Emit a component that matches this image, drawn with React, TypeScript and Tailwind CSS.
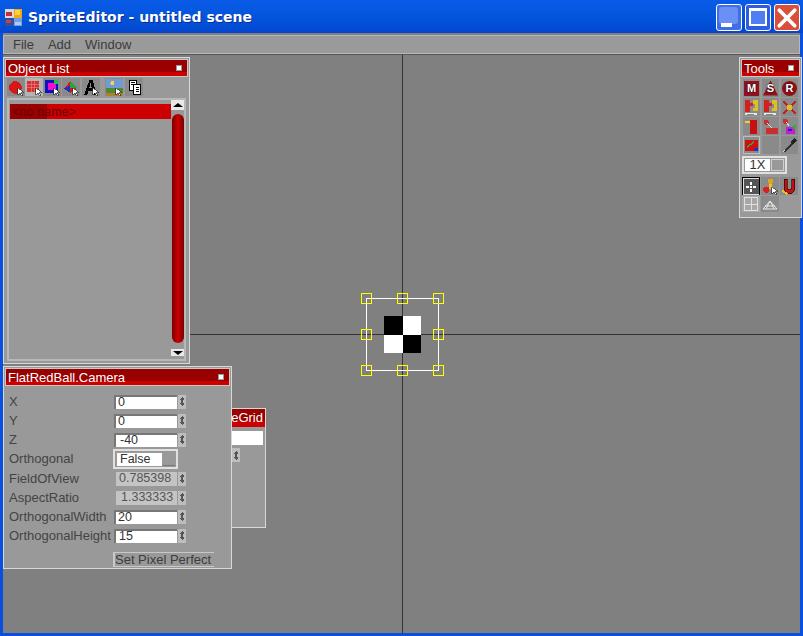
import type { ReactNode } from "react";

const sans = "font-['Liberation_Sans',Arial,sans-serif]";

function TitleBar({ label, className }: { label: string; className: string }) {
  return (
    <div className={`relative flex h-[18px] items-center overflow-hidden border border-[#c8c8c8] bg-[#cc0000] ${className}`}>
      <div className="absolute inset-x-0 top-0 h-[12px] bg-[#990000]" />
      <span className="relative pl-[2px] text-[13px] leading-none text-white">{label}</span>
      <span className="relative ml-auto mr-[5px] size-[6px] border border-[#999] bg-white" />
    </div>
  );
}

function Ico({ children, active, className }: { children?: ReactNode; active?: boolean; className?: string }) {
  return (
    <div className={`flex h-[18px] items-center justify-center ${active ? "bg-[#b4b4b4]" : "bg-[#8a8a8a]"} ${className ?? ""}`}>
      <svg viewBox="0 0 16 16" className="size-[17px]" shapeRendering="crispEdges">
        {children}
      </svg>
    </div>
  );
}

function Cursor() {
  return <path d="M9 8v7l2-2 2 3 1-1-2-2h3z" fill="#fff" stroke="#222" strokeWidth="0.6" />;
}

function DoorIcon() {
  return (
    <Ico>
      <path d="M2 1h5v3h2v3H7v5H2z" fill="#d02020" />
      <path d="M9 1h5v10H9V8h2V5H9z" fill="#e0c020" />
      <path d="M2 14h11M4 13l-2 1 2 1M11 13l2 1-2 1" fill="none" stroke="#e8e8e8" strokeWidth="1" />
    </Ico>
  );
}

function Spin() {
  return (
    <div className="flex h-[14px] w-[8px] flex-col items-center justify-center bg-[#bdbdbd]">
      <svg viewBox="0 0 6 9" className="h-[9px] w-[6px]" shapeRendering="crispEdges">
        <path d="M3 0l2 2v1H4v3h1v1L3 9 1 7V6h1V3H1V2z" fill="#555" />
      </svg>
    </div>
  );
}

function Row({ label, value, disabled, pad }: { label: string; value: string; disabled?: boolean; pad?: string }) {
  return (
    <div className="flex h-[19px] items-center">
      <span className="w-[109px] whitespace-nowrap pl-[4px] text-[13px] text-[#444]">{label}</span>
      <div
        className={`flex h-[14px] items-center text-[12.5px] ${pad ?? "pl-[2px]"} ${
          disabled ? "ml-[2px] w-[61px] bg-[#c4c4c4] text-[#555]" : "w-[63px] border-t-2 border-l-2 border-[#777] bg-white text-[#333]"
        }`}
      >
        {value}
      </div>
      <div className="ml-[1px]">
        <Spin />
      </div>
    </div>
  );
}

export default function App() {
  return (
    <div className={`relative flex h-[636px] w-[803px] flex-col overflow-hidden bg-[#0a50e0] ${sans}`}>
      {/* XP title bar */}
      <div className="flex h-[33px] shrink-0 items-center bg-gradient-to-b from-[#0a5be8] via-[#0455dc] to-[#0346cf] pl-[5px] pr-[3px] pt-[2px]">
        <svg viewBox="0 0 16 16" className="size-[17px]" shapeRendering="crispEdges">
          <rect width="8" height="8" fill="#d8d8e0" />
          <rect x="1" y="3" width="6" height="4" fill="#c83028" />
          <rect x="8" y="0" width="8" height="8" fill="#f0a810" />
          <rect x="9" y="1" width="5" height="5" fill="#ffd040" />
          <rect x="0" y="8" width="8" height="8" fill="#3050a0" />
          <rect x="1" y="10" width="5" height="3" fill="#d04040" />
          <rect x="8" y="8" width="8" height="8" fill="#70a0e8" />
          <rect x="9" y="12" width="6" height="3" fill="#b0c8f0" />
        </svg>
        <span className="ml-[6px] font-['DejaVu_Sans',sans-serif] text-[14px] font-bold text-white [text-shadow:1px_1px_0_#0a2a90]">
          SpriteEditor - untitled scene
        </span>
        <div className="ml-auto flex gap-[3px]">
          <div className="relative h-[27px] w-[26px] rounded-[3px] border border-white bg-[#3f6ee8]">
            <div className="absolute left-[2px] top-[2px] h-[17px] w-[19px] rounded-[3px] bg-[#6a90f5]" />
            <div className="absolute bottom-[3px] left-[4px] h-[4px] w-[11px] bg-white" />
          </div>
          <div className="relative h-[27px] w-[26px] rounded-[3px] border border-white bg-[#2f5ce0]">
            <div className="absolute left-[3px] top-[3px] size-[18px] border-[2px] border-t-[3px] border-white bg-[#4f7ff0]" />
          </div>
          <div className="flex h-[27px] w-[26px] items-center justify-center rounded-[3px] border border-white bg-[#d8503a]">
            <svg viewBox="0 0 20 20" className="size-[22px]">
              <path d="M3 3l14 14M17 3L3 17" stroke="#fff" strokeWidth="3.4" strokeLinecap="round" />
            </svg>
          </div>
        </div>
      </div>

      {/* client area */}
      <div className="mx-[3px] mb-[3px] flex min-h-0 flex-1 flex-col bg-[#808080]">
        <div className="mt-[2px] flex h-[19px] shrink-0 items-center gap-[14px] border border-[#b8b8b8] bg-[#9a9a9a] pl-[9px] text-[13px] text-[#3c3c3c]">
          <span>File</span>
          <span>Add</span>
          <span>Window</span>
        </div>
        <div className="h-px shrink-0 bg-[#555]" />
        <div className="relative flex-1" />
      </div>

      {/* axis lines */}
      <div className="absolute left-[402px] top-[55px] h-[578px] w-px bg-[#333]" />
      <div className="absolute left-[3px] top-[334px] h-px w-[797px] bg-[#333]" />

      {/* selected sprite */}
      <div className="absolute left-[384px] top-[316px] grid size-[37px] grid-cols-2">
        <div className="bg-black" />
        <div className="bg-white" />
        <div className="bg-white" />
        <div className="bg-black" />
      </div>
      <div className="absolute left-[366px] top-[298px] size-[73px] border border-white" />
      {[
        "left-[361px] top-[293px]",
        "left-[397px] top-[293px]",
        "left-[433px] top-[293px]",
        "left-[361px] top-[329px]",
        "left-[433px] top-[329px]",
        "left-[361px] top-[365px]",
        "left-[397px] top-[365px]",
        "left-[433px] top-[365px]",
      ].map((pos) => (
        <div key={pos} className={`absolute size-[11px] border border-[#ffff00] ${pos}`} />
      ))}

      {/* Object List */}
      <div className="absolute left-[3px] top-[57px] flex h-[307px] w-[187px] flex-col border border-[#d8d8d8] bg-[#999] p-[1px]">
        <TitleBar label="Object List" className="shrink-0" />
        <div className="flex h-[20px] shrink-0 pl-[2px] pt-[1px]">
          <Ico className="w-[18px]">
            <circle cx="7" cy="8" r="6" fill="#d81818" />
            <Cursor />
          </Ico>
          <Ico active className="w-[18px]">
            <rect x="1" y="2" width="11" height="10" fill="#d83030" />
            <path d="M1 5h11M1 8h11M5 2v10M8 2v10" stroke="#f08080" strokeWidth="0.6" />
            <Cursor />
          </Ico>
          <Ico className="w-[18px]">
            <rect x="1" y="1" width="12" height="12" fill="#1010c0" />
            <rect x="4" y="4" width="7" height="6" fill="#f010d0" />
            <rect x="9" y="1" width="4" height="4" fill="#20c040" />
            <Cursor />
          </Ico>
          <Ico className="ml-[1px] w-[18px]">
            <path d="M7 2l6 6-6 5-6-4z" fill="#d81818" />
            <path d="M7 2l6 6H7z" fill="#30a040" />
            <path d="M1 9l6-3v7z" fill="#2030c0" />
            <Cursor />
          </Ico>
          <Ico className="ml-[2px] w-[18px]">
            <path d="M1 15L6 1h3l4 14h-3l-1-4H5l-1 4zM6 8h2L7 4z" fill="#000" />
            <Cursor />
          </Ico>
          <Ico className="ml-[5px] w-[18px]">
            <rect width="16" height="8" fill="#6f9bd8" />
            <circle cx="6" cy="4" r="2" fill="#ffd040" />
            <rect y="8" width="16" height="8" fill="#4f8a30" />
            <rect y="13" width="16" height="3" fill="#b08030" />
            <Cursor />
          </Ico>
          <Ico className="ml-[2px] w-[18px]">
            <rect x="3" y="1" width="7" height="10" fill="#fff" stroke="#000" strokeWidth="1" />
            <rect x="7" y="5" width="7" height="10" fill="#fff" stroke="#000" strokeWidth="1" />
            <path d="M5 3h3M5 5h2M9 8h3M9 10h3M9 12h3" stroke="#000" strokeWidth="1" />
          </Ico>
        </div>
        <div className="mx-[2px] mb-[1px] mt-[1px] flex min-h-0 flex-1 border-2 border-[#b8b8b8] bg-[#999]">
          <div className="min-w-0 flex-1 pl-[1px] pt-[4px]">
            <div className="relative flex h-[15px] items-center bg-[#cc0000]">
              <div className="absolute inset-y-0 left-0 w-[37px] bg-[#990000]" />
              <span className="relative pl-[2px] text-[12px] tracking-[0.4px] text-[#660000]">&lt;no name&gt;</span>
            </div>
          </div>
          <div className="flex w-[13px] shrink-0 flex-col items-center">
            <div className="flex h-[10px] w-full items-center justify-center bg-[#e8e8e8]">
              <div className="size-0 border-x-[5px] border-b-[4px] border-x-transparent border-b-black" />
            </div>
            <div className="mt-[4px] w-[12px] flex-1 rounded-[6px] bg-gradient-to-r from-[#7a0000] via-[#cc0000] to-[#7a0000]" />
            <div className="mb-[3px] mt-[6px] flex h-[7px] w-full items-center justify-center bg-[#e8e8e8]">
              <div className="size-0 border-x-[5px] border-t-[4px] border-x-transparent border-t-black" />
            </div>
          </div>
        </div>
      </div>

      {/* Window behind the camera panel */}
      <div className="absolute left-[200px] top-[408px] flex h-[120px] w-[66px] flex-col items-end border border-[#d8d8d8] bg-[#999]">
        <div className="relative flex h-[18px] w-full items-center justify-end overflow-hidden bg-[#cc0000] pr-[2px] text-[13px] text-white">
          <div className="absolute inset-x-0 top-0 h-[12px] bg-[#990000]" />
          <span className="relative">eGrid</span>
        </div>
        <div className="mr-[2px] mt-[4px] h-[14px] w-[60px] bg-white" />
        <div className="mr-[25px] mt-[3px]">
          <Spin />
        </div>
      </div>

      {/* Camera property grid */}
      <div className="absolute left-[3px] top-[366px] flex h-[203px] w-[229px] flex-col border border-[#d8d8d8] bg-[#999] p-[1px]">
        <TitleBar label="FlatRedBall.Camera" className="shrink-0" />
        <div className="flex flex-1 flex-col pt-[6px]">
          <Row label="X" value="0" />
          <Row label="Y" value="0" />
          <Row label="Z" value="-40" pad="pl-[4px]" />
          <div className="flex h-[20px] items-center">
            <span className="w-[108px] pl-[4px] text-[13px] text-[#444]">Orthogonal</span>
            <div className="flex h-[20px] w-[65px] items-center border-2 border-[#e0e0e0] bg-[#999] pl-[2px] pr-[1px]">
              <div className="flex h-[13px] w-[45px] items-center bg-white pl-[3px] text-[12.5px] text-[#333]">False</div>
              <div className="ml-[1px] h-[13px] flex-1 border-b border-[#777]" />
            </div>
          </div>
          <Row label="FieldOfView" value="0.785398" disabled pad="pl-[3px]" />
          <Row label="AspectRatio" value="1.333333" disabled pad="pl-[5px]" />
          <Row label="OrthogonalWidth" value="20" />
          <Row label="OrthogonalHeight" value="15" pad="pl-[3px]" />
          <div className="ml-[108px] mt-[7px] flex h-[15px] w-[101px] items-center whitespace-nowrap border-y border-l-2 border-[#c8c8c8] text-[13px] text-[#3c3c3c]">
            Set Pixel Perfect
          </div>
        </div>
      </div>

      {/* Tools */}
      <div className="absolute left-[739px] top-[57px] flex h-[161px] w-[63px] flex-col border border-[#d8d8d8] bg-[#999] p-[1px]">
        <TitleBar label="Tools" className="shrink-0" />
        <div className="mt-[2px] grid grid-cols-3 gap-x-[2px] gap-y-[1px] px-[2px]">
          {["M", "S", "R"].map((letter, i) => (
            <div key={letter} className="relative flex h-[18px] items-center justify-center bg-[#8a8a8a]">
              <div
                className={`absolute size-[15px] ${
                  i === 0 ? "bg-[#901020]" : i === 1 ? "bg-[#901018] [clip-path:polygon(50%_0,100%_100%,0_100%)]" : "rounded-full bg-[#901018]"
                }`}
              />
              <span className="relative text-[11px] font-bold leading-none text-white [text-shadow:0_0_2px_#000]">{letter}</span>
            </div>
          ))}
          <DoorIcon />
          <DoorIcon />
          <Ico>
            <rect x="6" y="6" width="4" height="4" fill="#e0c020" />
            <path d="M2 2l4 4M14 2l-4 4M2 14l4-4M14 14l-4-4" stroke="#c02020" strokeWidth="1.5" />
          </Ico>
          <Ico>
            <rect x="7" y="2" width="6" height="13" fill="#c81010" />
            <path d="M2 3h5v2H2z" fill="#f0d020" />
          </Ico>
          <Ico>
            <circle cx="4" cy="4" r="2.5" fill="#c83030" />
            <path d="M5 5l4 4" stroke="#ddd" strokeWidth="1" />
            <rect x="4" y="9" width="11" height="6" fill="#c83030" />
          </Ico>
          <Ico>
            <circle cx="4" cy="3" r="2.5" fill="#c83030" />
            <path d="M5 4l3 4" stroke="#ddd" strokeWidth="1" />
            <rect x="5" y="8" width="8" height="7" fill="#c020d0" />
            <rect x="11" y="7" width="3" height="3" fill="#30b040" />
            <rect x="7" y="10" width="3" height="2" fill="#2020c0" />
          </Ico>
          <Ico className="border border-[#bdbdbd]">
            <rect x="1" y="2" width="14" height="12" fill="#d01010" />
            <path d="M3 10l8-6" stroke="#40a040" strokeWidth="1.5" />
            <rect x="11" y="11" width="4" height="3" fill="#2030c0" />
          </Ico>
          <div className="bg-[#8a8a8a]" />
          <Ico>
            <path d="M3 14l8-8" stroke="#333" strokeWidth="2" />
            <path d="M10 6l4-4" stroke="#222" strokeWidth="3" />
            <path d="M2 14l2-2" stroke="#ddd" strokeWidth="1" />
          </Ico>
        </div>
        <div className="ml-[1px] mt-[2px] flex h-[18px] w-[45px] items-center border-2 border-[#e0e0e0] p-[1px]">
          <div className="flex h-full w-[25px] items-center justify-center bg-white text-[13px] text-[#333]">1X</div>
          <div className="ml-[1px] h-full flex-1 border border-[#d0d0d0] bg-[#999]" />
        </div>
        <div className="mt-[3px] grid grid-cols-3 gap-x-[1px] pl-[1px] pr-[2px]">
          <Ico className="border border-black">
            <rect x="0" y="0" width="16" height="16" fill="#555" stroke="#ddd" strokeWidth="1" />
            <path d="M8 3v3M8 10v3M3 8h3M10 8h3" stroke="#fff" strokeWidth="2" />
            <rect x="7" y="7" width="2" height="2" fill="#fff" />
          </Ico>
          <Ico>
            <circle cx="8" cy="3" r="2.5" fill="#e8a020" />
            <circle cx="4" cy="11" r="3" fill="#d82020" />
            <path d="M8 6v4" stroke="#e8c040" strokeWidth="2" />
            <Cursor />
          </Ico>
          <Ico>
            <path d="M3 1h3v8a2 2 0 004 0V1h3v9a5 5 0 01-10 0z" fill="#c01010" stroke="#200" strokeWidth="0.6" />
            <path d="M1 12l5 3" stroke="#f0c020" strokeWidth="2" />
          </Ico>
        </div>
        <div className="mt-[1px] flex h-[16px] gap-[1px] pl-[1px]">
          <div className="flex w-[18px] items-center justify-center bg-[#a8a8a8]">
            <svg viewBox="0 0 16 16" className="size-4" shapeRendering="crispEdges">
              <path d="M1.5 1.5h13v13h-13zM8 1.5v13M1.5 8h13" fill="none" stroke="#e0e0e0" strokeWidth="1" />
            </svg>
          </div>
          <div className="flex w-[18px] items-center justify-center bg-[#8a8a8a]">
            <svg viewBox="0 0 16 16" className="size-4">
              <path d="M1 13L8 5l7 8zM4 13l4-8 4 8M3 10h10" fill="none" stroke="#e8e8e8" strokeWidth="1" />
            </svg>
          </div>
        </div>
      </div>
    </div>
  );
}
